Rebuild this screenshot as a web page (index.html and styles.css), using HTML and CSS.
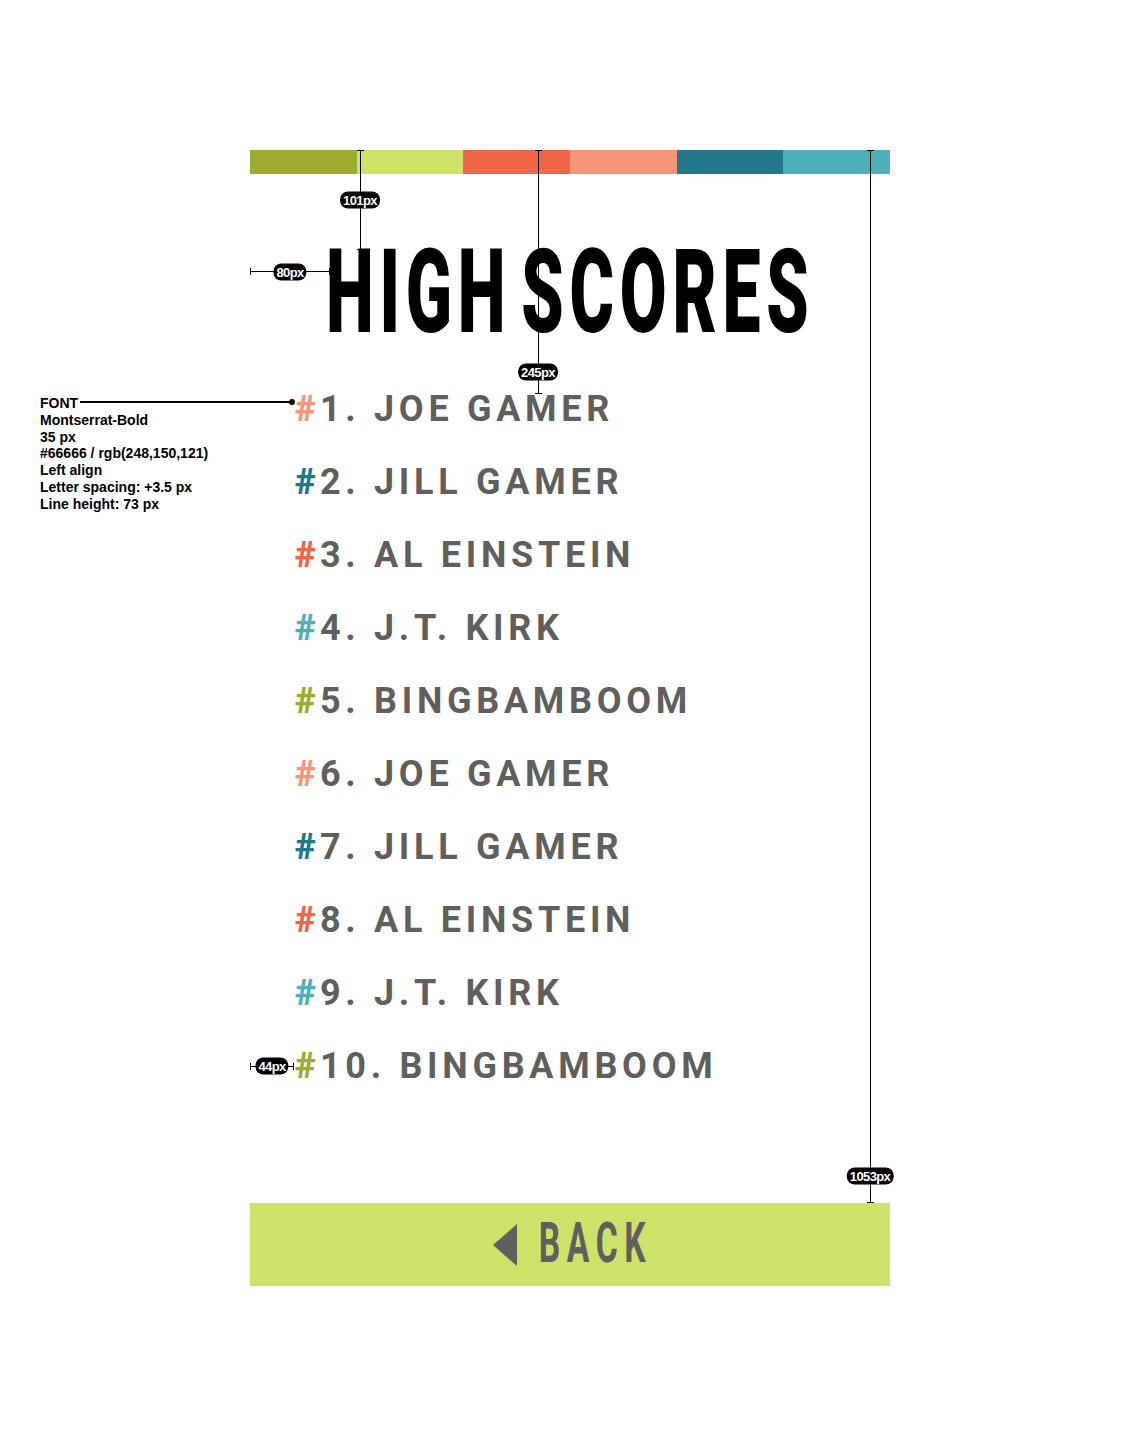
FILE: index.html
```html
<!DOCTYPE html>
<html lang="en">
<head>
<meta charset="utf-8">
<title>High Scores</title>
<link rel="stylesheet" href="styles.css">
</head>
<body>
<div class="page">
  <div class="screen">
    <div class="colorbar">
      <span class="seg c-olive"></span>
      <span class="seg c-lime"></span>
      <span class="seg c-red"></span>
      <span class="seg c-salmon"></span>
      <span class="seg c-teal"></span>
      <span class="seg c-aqua"></span>
    </div>
    <h1 class="title"><span class="title-text">HIGH SCORES</span></h1>
    <ol class="scores">
      <li class="score"><span class="hash t-salmon">#</span>1. JOE GAMER</li>
      <li class="score"><span class="hash t-teal">#</span>2. JILL GAMER</li>
      <li class="score"><span class="hash t-red">#</span>3. AL EINSTEIN</li>
      <li class="score"><span class="hash t-aqua">#</span>4. J.T. KIRK</li>
      <li class="score"><span class="hash t-olive">#</span>5. BINGBAMBOOM</li>
      <li class="score"><span class="hash t-salmon">#</span>6. JOE GAMER</li>
      <li class="score"><span class="hash t-teal">#</span>7. JILL GAMER</li>
      <li class="score"><span class="hash t-red">#</span>8. AL EINSTEIN</li>
      <li class="score"><span class="hash t-aqua">#</span>9. J.T. KIRK</li>
      <li class="score"><span class="hash t-olive">#</span>10. BINGBAMBOOM</li>
    </ol>
    <button class="back" type="button">
      <svg class="back-arrow" width="24" height="42" viewBox="0 0 24 42" aria-hidden="true"><polygon points="24,0 24,42 0,21" fill="#5f5f5d"/></svg>
      <span class="back-label"><span class="back-text">BACK</span></span>
    </button>
  </div>

  <!-- redline annotations -->
  <div class="anno vline v1"></div>
  <div class="anno badge b101">101px</div>
  <div class="anno vline v2"></div>
  <div class="anno badge b245">245px</div>
  <div class="anno vline v3"></div>
  <div class="anno badge b1053">1053px</div>
  <div class="anno hline h80"></div>
  <div class="anno badge b80">80px</div>
  <div class="anno hline h44"></div>
  <div class="anno badge b44">44px</div>

  <div class="anno font-note">
    <div class="note-row"><span>FONT</span><span class="leader"></span></div>
    <div>Montserrat-Bold</div>
    <div>35 px</div>
    <div>#66666 / rgb(248,150,121)</div>
    <div>Left align</div>
    <div>Letter spacing: +3.5 px</div>
    <div>Line height: 73 px</div>
  </div>
</div>
</body>
</html>
```

FILE: styles.css
```css
* { box-sizing: border-box; }

html, body {
  margin: 0;
  padding: 0;
  background: #ffffff;
}

.page {
  position: relative;
  width: 1140px;
  height: 1436px;
  padding-top: 150px;
  font-family: "Liberation Sans", Arial, sans-serif;
}

.screen {
  width: 640px;
  margin-left: 250px;
}

.colorbar {
  display: flex;
  height: 24px;
}
.seg { flex: 1; }
.c-olive { background: #9dac2e; }
.c-lime { background: #cde368; }
.c-red { background: #ef6649; }
.c-salmon { background: #f89679; }
.c-teal { background: #24788c; }
.c-aqua { background: #4fafbb; }

.t-olive { color: #9dac2e; }
.t-red { color: #ef6649; }
.t-salmon { color: #f89679; }
.t-teal { color: #24788c; }
.t-aqua { color: #4fafbb; }

.title {
  display: flex;
  justify-content: center;
  margin: 60px 0 0;
  height: 117px;
  font-family: Roboto, "Liberation Sans", sans-serif;
  font-weight: 900;
  font-size: 117px;
  line-height: 1;
  color: #000;
  white-space: nowrap;
}
.title-text {
  display: inline-block;
  flex: none;
  transform: scaleX(0.58);
  letter-spacing: 10px;
  word-spacing: -22px;
}

.scores {
  list-style: none;
  margin: 22px 0 0;
  padding: 0 0 0 45px;
}
.score {
  height: 73px;
  font-family: Roboto, "Liberation Sans", sans-serif;
  font-weight: 700;
  font-size: 36px;
  line-height: 73px;
  letter-spacing: 4.7px;
  color: #5f5f5d;
  white-space: nowrap;
}
.hash { letter-spacing: 0; margin-right: 4px; font-weight: 900; }

.back {
  display: flex;
  align-items: center;
  justify-content: center;
  gap: 21px;
  width: 640px;
  height: 83px;
  margin-top: 100px;
  padding: 0;
  border: 0;
  background: #cce268;
}
.back-arrow { display: block; flex: none; }
.back-label {
  display: flex;
  justify-content: center;
  width: 110px;
}
.back-text {
  flex: none;
  display: inline-block;
  margin-top: -3px;
  margin-right: -6px;
  font-family: Roboto, "Liberation Sans", sans-serif;
  font-weight: 700;
  font-size: 56px;
  line-height: 1;
  letter-spacing: 11px;
  color: #5f5f5d;
  transform: scaleX(0.6);
}

/* annotations */
.anno { position: absolute; }
.vline { width: 1px; background: #000; }
.vline::before, .vline::after {
  content: "";
  position: absolute;
  left: -3px;
  width: 7px;
  height: 1px;
  background: #000;
}
.vline::before { top: 0; }
.vline::after { bottom: 0; }
.v1 { left: 360px; top: 150px; height: 100px; }
.v2 { left: 538px; top: 150px; height: 244px; }
.v3 { left: 870px; top: 150px; height: 1053px; }

.hline { height: 1px; background: #000; }
.hline::before, .hline::after {
  content: "";
  position: absolute;
  top: -3px;
  width: 1px;
  height: 7px;
  background: #000;
}
.hline::before { left: 0; }
.hline::after { right: 0; }
.h80 { left: 250px; top: 271px; width: 80px; }
.h44 { left: 250px; top: 1066px; width: 44px; }

.badge {
  height: 17px;
  padding: 0 3px;
  border-radius: 8px;
  background: #000;
  color: #fff;
  font-family: "Liberation Sans", Arial, sans-serif;
  font-weight: 700;
  font-size: 13px;
  line-height: 17px;
  letter-spacing: -0.6px;
  transform: translate(-50%, -50%);
}
.b101 { left: 360px; top: 200px; }
.b245 { left: 538px; top: 372px; }
.b1053 { left: 870px; top: 1176px; }
.b80 { left: 290px; top: 272px; }
.b44 { left: 272px; top: 1066px; }

.font-note {
  left: 40px;
  top: 395px;
  font-family: "Liberation Sans", Arial, sans-serif;
  font-weight: 700;
  font-size: 14px;
  line-height: 16.8px;
  color: #000;
}
.note-row {
  display: flex;
  align-items: center;
  width: 252px;
}
.leader {
  position: relative;
  flex: 1;
  height: 2px;
  margin-left: 2px;
  margin-top: -2px;
  background: #000;
}
.leader::after {
  content: "";
  position: absolute;
  right: -3px;
  top: -2px;
  width: 6px;
  height: 6px;
  border-radius: 50%;
  background: #000;
}
```
